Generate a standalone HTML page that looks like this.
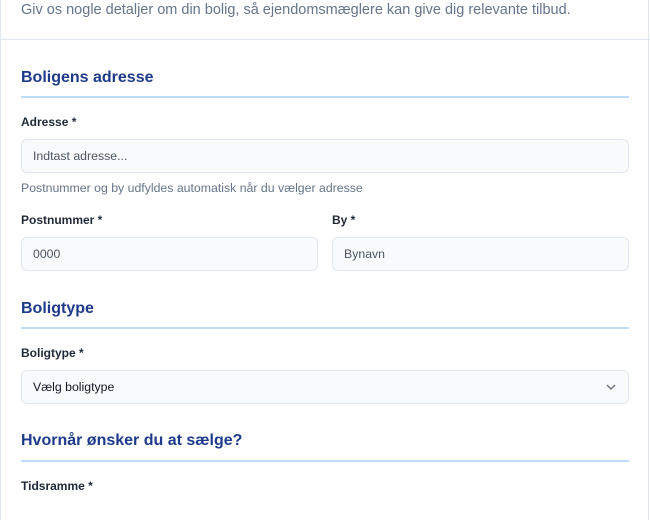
<!DOCTYPE html>
<html><head><style>
*{box-sizing:border-box;margin:0;padding:0}
body{width:650px;height:500px;overflow:hidden;background:#fff;font-family:"Liberation Sans",sans-serif;position:relative}
.frame{position:absolute;left:0;top:-20px;width:649px;height:540px;border-left:1px solid #e2e8f0;border-right:1px solid #e2e8f0}
.a{position:absolute;white-space:nowrap}
.sub{left:21px;top:1px;font-size:14.5px;color:#64748b;line-height:18px}
.hr{position:absolute;left:0;width:650px;top:39px;height:1px;background:#e2e8f0}
h2{position:absolute;left:21px;font-size:16px;font-weight:bold;color:#1e3a8a;line-height:22px;white-space:nowrap}
.ln{position:absolute;left:21px;width:608px;height:2px;background:#bfdbfe}
.lb{position:absolute;font-size:12px;font-weight:bold;color:#1f2937;line-height:16px;white-space:nowrap}
.in{position:absolute;height:34px;background:#f8fafc;border:1px solid #e2e8f0;border-radius:6px;font-size:12.3px;color:#4b5563;padding-left:11px;line-height:32px}
.hint{position:absolute;left:21px;top:180px;font-size:12.3px;color:#64748b;line-height:16px}
</style></head><body>
<div class="frame"></div>
<div class="a sub">Giv os nogle detaljer om din bolig, så ejendomsmæglere kan give dig relevante tilbud.</div>
<div class="hr"></div>
<h2 style="top:67px">Boligens adresse</h2>
<div class="ln" style="top:96px"></div>
<div class="lb" style="left:21px;top:114px">Adresse *</div>
<div class="in" style="left:21px;top:139px;width:608px">Indtast adresse...</div>
<div class="hint">Postnummer og by udfyldes automatisk når du vælger adresse</div>
<div class="lb" style="left:21px;top:212px">Postnummer *</div>
<div class="lb" style="left:332px;top:212px">By *</div>
<div class="in" style="left:21px;top:237px;width:297px">0000</div>
<div class="in" style="left:332px;top:237px;width:297px">Bynavn</div>
<h2 style="top:298px">Boligtype</h2>
<div class="ln" style="top:327px"></div>
<div class="lb" style="left:21px;top:345px">Boligtype *</div>
<div class="in" style="left:21px;top:370px;width:608px;color:#111827">Vælg boligtype
<svg style="position:absolute;right:12px;top:12px" width="10" height="8" viewBox="0 0 10 8"><path d="M1 2l4 4 4-4" fill="none" stroke="#6b7280" stroke-width="1.4"/></svg></div>
<h2 style="top:430px">Hvornår ønsker du at sælge?</h2>
<div class="ln" style="top:460px"></div>
<div class="lb" style="left:21px;top:478px">Tidsramme *</div>
</body></html>
